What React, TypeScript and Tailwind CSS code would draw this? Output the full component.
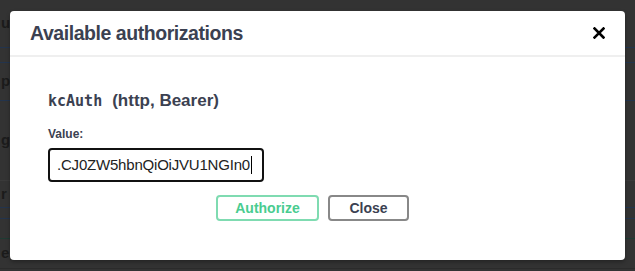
import React from 'react';

const bgRows = [
  { h: 'h-[48px]', text: 'ue', border: 'border-[#23344d]' },
  { h: 'h-[15px]', text: '', border: 'border-[#23344d]' },
  { h: 'h-[38px]', text: 'p', border: 'border-[#23344d]' },
  { h: 'h-[80px]', text: 'gi', border: 'border-[#3a3a3a]' },
  { h: 'h-[27px]', text: 'r', border: 'border-[#23344d]' },
  { h: 'h-[11px]', text: '', border: 'border-[#23344d]' },
  { h: 'h-[20px]', text: '', border: 'border-[#1f3b33]' },
  { h: 'h-[30px]', text: 'en', border: 'border-[#2b2b2b]' },
];

const App: React.FC = () => {
  return (
    <div className="relative w-[635px] h-[271px] overflow-hidden bg-[#333333] font-['Liberation_Sans',Arial,sans-serif]">
      {/* page behind the backdrop */}
      <div className="flex flex-col">
        {bgRows.map((r, i) => (
          <div key={i} className={`${r.h} border-b ${r.border} flex items-center text-[15px] font-bold text-[#1b1b1b] pl-[2px]`}>
            <span className="-ml-[1px]">{r.text}</span>
          </div>
        ))}
      </div>

      {/* modal */}
      <div className="absolute left-[10px] top-[11px] w-[615px] h-[249px] bg-white rounded-[4px] shadow-[0_2px_4px_rgba(0,0,0,0.3)] flex flex-col">
        <div className="h-[46px] border-b-2 border-[#efefef] flex items-center justify-between pl-[20px] pr-[20px]">
          <h3 className="text-[19.5px] font-bold text-[#3b4151] tracking-[-0.45px] pt-[1px]">Available authorizations</h3>
          <button className="text-black">
            <svg width="12" height="12" viewBox="0 0 12 12">
              <path d="M1.5 1.5 L10.5 10.5 M10.5 1.5 L1.5 10.5" stroke="currentColor" strokeWidth="2.6" strokeLinecap="square" />
            </svg>
          </button>
        </div>
        <div className="pl-[38px] pt-[34px] flex flex-col">
          <h4 className="flex items-baseline text-[17px] font-bold text-[#3b4151] leading-[20px]">
            <code className="font-['DejaVu_Sans_Mono',monospace] text-[15px]">kcAuth</code>
            <span className="ml-[10px]">(http, Bearer)</span>
          </h4>
          <label className="mt-[16px] text-[12px] font-bold text-[#3b4151] leading-[14px]">Value:</label>
          <div className="mt-[7px] w-[216px] h-[34px] border-2 border-[#111] rounded-[4px] flex items-center pl-[7px] overflow-hidden">
            <span className="text-[15px] tracking-[-0.2px] text-[#222] whitespace-nowrap">.CJ0ZW5hbnQiOiJVU1NGIn0</span>
            <span className="ml-[1px] w-[1px] h-[18px] bg-black"></span>
          </div>
          <div className="mt-[13px] flex gap-[9px] pl-[168px]">
            <button className="w-[103px] h-[26px] border-2 border-[#49cc90]/70 rounded-[4px] text-[14px] font-bold text-[#49cc90]">Authorize</button>
            <button className="w-[81px] h-[26px] border-2 border-[#888] rounded-[4px] text-[14px] font-bold text-[#3b4151]">Close</button>
          </div>
        </div>
      </div>
    </div>
  );
};

export default App;
